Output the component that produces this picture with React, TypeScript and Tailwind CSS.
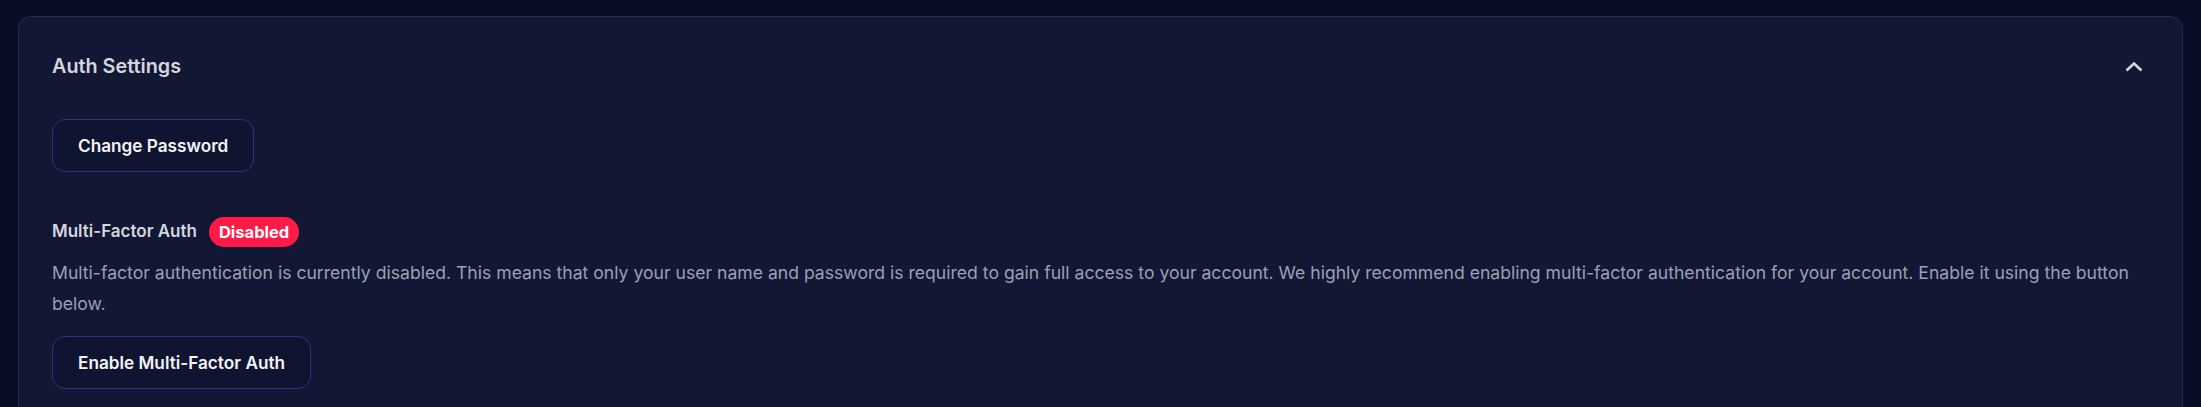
import React from "react";

export default function App() {
  return (
    <div
      className="min-h-screen bg-[#090d26] px-[18px] pt-4"
      style={{ fontFamily: "Inter, 'Noto Sans', sans-serif" }}
    >
      <div className="rounded-[13px] border border-[#262b4d] bg-[#121733] px-[33px] pt-[34px] pb-10">
        <div className="flex items-center justify-between">
          <h2 className="text-[19.8px] leading-[31px] font-semibold text-[#d4d6de]">Auth Settings</h2>
          <button className="flex h-[31px] w-[31px] items-center justify-center text-[#d4d6de]" aria-label="Collapse">
            <svg width="18" height="10" viewBox="0 0 18 10" fill="none">
              <path d="M1.5 8.5 L9 1.5 L16.5 8.5" stroke="currentColor" strokeWidth="2.6" strokeLinecap="butt" strokeLinejoin="miter" />
            </svg>
          </button>
        </div>

        <button className="mt-[37px] h-[53px] rounded-[13px] border border-[#3a2b7c] bg-[#0f1430] px-[25px] text-[17.2px] font-semibold text-[#f3f4f8]">
          Change Password
        </button>

        <div className="mt-[45px] flex items-center gap-[12px]">
          <span className="text-[17px] font-semibold text-[#d4d6de]">Multi-Factor Auth</span>
          <span className="flex h-[30px] items-center rounded-full bg-[#ff1a47] px-[10px] text-[16.5px] font-bold text-white">
            Disabled
          </span>
        </div>

        <p className="mt-[10px] text-[17.6px] leading-[31px] text-[#9ba0b3]">
          Multi-factor authentication is currently disabled. This means that only your user name and password is required to gain full access to your account. We highly recommend enabling multi-factor authentication for your account. Enable it using the button below.
        </p>

        <button className="mt-[17px] h-[53px] rounded-[13px] border border-[#3a2b7c] bg-[#0f1430] px-[25px] text-[17.2px] font-semibold text-[#f3f4f8]">
          Enable Multi-Factor Auth
        </button>
      </div>
    </div>
  );
}
